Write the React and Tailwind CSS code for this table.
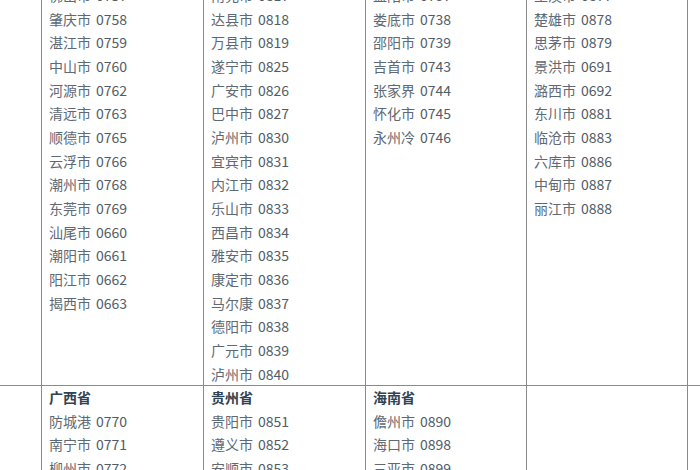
const TOP = [
  [
    ["佛山市", "0757"],
    ["肇庆市", "0758"],
    ["湛江市", "0759"],
    ["中山市", "0760"],
    ["河源市", "0762"],
    ["清远市", "0763"],
    ["顺德市", "0765"],
    ["云浮市", "0766"],
    ["潮州市", "0768"],
    ["东莞市", "0769"],
    ["汕尾市", "0660"],
    ["潮阳市", "0661"],
    ["阳江市", "0662"],
    ["揭西市", "0663"],
  ],
  [
    ["南充市", "0817"],
    ["达县市", "0818"],
    ["万县市", "0819"],
    ["遂宁市", "0825"],
    ["广安市", "0826"],
    ["巴中市", "0827"],
    ["泸州市", "0830"],
    ["宜宾市", "0831"],
    ["内江市", "0832"],
    ["乐山市", "0833"],
    ["西昌市", "0834"],
    ["雅安市", "0835"],
    ["康定市", "0836"],
    ["马尔康", "0837"],
    ["德阳市", "0838"],
    ["广元市", "0839"],
    ["泸州市", "0840"],
  ],
  [
    ["益阳市", "0737"],
    ["娄底市", "0738"],
    ["邵阳市", "0739"],
    ["吉首市", "0743"],
    ["张家界", "0744"],
    ["怀化市", "0745"],
    ["永州冷", "0746"],
  ],
  [
    ["玉溪市", "0877"],
    ["楚雄市", "0878"],
    ["思茅市", "0879"],
    ["景洪市", "0691"],
    ["潞西市", "0692"],
    ["东川市", "0881"],
    ["临沧市", "0883"],
    ["六库市", "0886"],
    ["中甸市", "0887"],
    ["丽江市", "0888"],
  ],
];

const BOTTOM = [
  {
    province: "广西省",
    cities: [
      ["防城港", "0770"],
      ["南宁市", "0771"],
      ["柳州市", "0772"],
    ],
  },
  {
    province: "贵州省",
    cities: [
      ["贵阳市", "0851"],
      ["遵义市", "0852"],
      ["安顺市", "0853"],
    ],
  },
  {
    province: "海南省",
    cities: [
      ["儋州市", "0890"],
      ["海口市", "0898"],
      ["三亚市", "0899"],
    ],
  },
  { province: "", cities: [] },
];

const WIDTHS = ["w-[162px]", "w-[162px]", "w-[161px]", "w-[161px]"];

function CityRow({ name, code }) {
  return (
    <div className="flex whitespace-nowrap">
      <span className="text-[#5d6974]">{name}</span>
      <span className="ml-[5px] text-[#505c66]">{code}</span>
    </div>
  );
}

export default function App() {
  return (
    <div
      className="h-[470px] w-[700px] overflow-hidden bg-white text-[14px] leading-[23.67px]"
      style={{ fontFamily: '"Noto Sans CJK SC", "Noto Sans", sans-serif' }}
    >
      <div className="mt-[-16px] flex flex-col">
        {/* top row: lists continue from above the crop */}
        <div className="flex h-[402px] border-b border-[#8a8a8a]">
          <div className="w-[42px] shrink-0 border-r border-[#8a8a8a]" />
          {TOP.map((col, i) => (
            <div
              key={i}
              className={`${WIDTHS[i]} shrink-0 overflow-hidden border-r border-[#8a8a8a] pl-[7px]`}
            >
              {col.map(([name, code]) => (
                <CityRow key={name + code} name={name} code={code} />
              ))}
            </div>
          ))}
        </div>

        {/* bottom row: new provinces */}
        <div className="flex h-[120px]">
          <div className="w-[42px] shrink-0 border-r border-[#8a8a8a]" />
          {BOTTOM.map((col, i) => (
            <div
              key={i}
              className={`${WIDTHS[i]} shrink-0 border-r border-[#8a8a8a] pl-[7px]`}
            >
              {col.province && (
                <div className="font-bold text-[#2e4252]">{col.province}</div>
              )}
              {col.cities.map(([name, code]) => (
                <CityRow key={name + code} name={name} code={code} />
              ))}
            </div>
          ))}
        </div>
      </div>
    </div>
  );
}
